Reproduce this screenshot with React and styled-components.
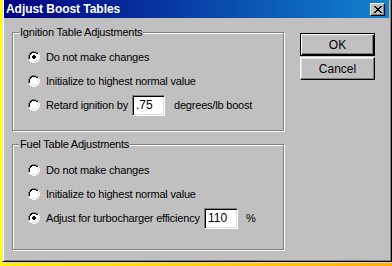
import React from 'react';
import styled, { createGlobalStyle } from 'styled-components';

const GlobalStyle = createGlobalStyle`
  html, body {
    margin: 0;
    padding: 0;
    background: #ffff00;
    overflow: hidden;
  }
  #root {
    width: 392px;
    height: 266px;
  }
`;

const Screen = styled.div`
  width: 392px;
  height: 266px;
  display: flex;
  flex-direction: column;
  padding-left: 2px;
  box-sizing: border-box;
`;

const Window = styled.div`
  width: 390px;
  height: 262px;
  box-sizing: border-box;
  background: #c0c0c0;
  border-left: 1px solid #dfdfdf;
  border-right: 1px solid #000;
  border-bottom: 1px solid #000;
  box-shadow: inset 1px 0 0 #fff, inset -1px -1px 0 #808080;
  padding: 0 2px 2px 1px;
  display: flex;
  flex-direction: column;
  font-family: "Liberation Sans", Arial, sans-serif;
  font-size: 11px;
  letter-spacing: -0.2px;
  color: #000;
`;

const TaskStrip = styled.div`
  flex: 1;
  background: linear-gradient(to right, #ffef00 0%, #ffd000 55%, #ffb000 100%);
  border-top: 1px solid #d8d8d8;
`;

const TitleBar = styled.div`
  height: 18px;
  background: linear-gradient(to right, #000080, #1084d0);
  display: flex;
  align-items: center;
  justify-content: space-between;
  padding: 0 4px 0 2px;
`;

const Title = styled.span`
  color: #fff;
  font-weight: bold;
  font-size: 12px;
  font-family: "Liberation Sans", Arial, sans-serif;
  letter-spacing: -0.05px;
`;

const CloseButton = styled.div`
  width: 15px;
  height: 13px;
  box-sizing: border-box;
  background: #c0c0c0;
  border-top: 1px solid #fff;
  border-left: 1px solid #fff;
  border-right: 1px solid #000;
  border-bottom: 1px solid #000;
  box-shadow: inset -1px -1px 0 #808080;
  display: flex;
  align-items: center;
  justify-content: center;
`;

const Body = styled.div`
  display: flex;
  padding: 14px 0 0 8px;
`;

const Groups = styled.div`
  display: flex;
  flex-direction: column;
  gap: 13px;
`;

const GroupBox = styled.div`
  position: relative;
  width: 272px;
  height: ${(p) => p.$h}px;
  box-sizing: border-box;
  border: 1px solid #808080;
  box-shadow: 1px 1px 0 #fff, inset 1px 1px 0 #fff;
  padding: ${(p) => p.$top}px 0 0 15px;
  display: flex;
  flex-direction: column;
`;

const Legend = styled.span`
  position: absolute;
  top: -8px;
  left: 6px;
  padding: 0 1px;
  background: #c0c0c0;
  line-height: 14px;
`;

const Row = styled.div`
  height: 24px;
  display: flex;
  align-items: center;
  white-space: nowrap;
`;

const Label = styled.span`
  margin-left: 6px;
  ${(p) => (p.$w ? `width: ${p.$w}px; flex-shrink: 0;` : '')}
`;

const TextBox = styled.div`
  width: ${(p) => p.$w}px;
  height: 21px;
  box-sizing: border-box;
  margin-right: ${(p) => p.$after}px;
  background: #fff;
  border-top: 1px solid #808080;
  border-left: 1px solid #808080;
  border-right: 1px solid #fff;
  border-bottom: 1px solid #fff;
  box-shadow: inset 1px 1px 0 #000, inset -1px -1px 0 #dfdfdf;
  padding: 0 0 0 3px;
  display: flex;
  align-items: center;
  font-size: 12px;
  letter-spacing: 0;
`;

const Buttons = styled.div`
  display: flex;
  flex-direction: column;
  gap: 1px;
  margin: 1px 0 0 16px;
`;

const Button = styled.div`
  width: 75px;
  height: 23px;
  box-sizing: border-box;
  background: #c0c0c0;
  border: 1px solid ${(p) => (p.$default ? '#000' : '#fff')};
  border-right-color: #000;
  border-bottom-color: #000;
  box-shadow: ${(p) =>
    p.$default
      ? 'inset 1px 1px 0 #fff, inset -1px -1px 0 #000, inset -2px -2px 0 #808080'
      : 'inset -1px -1px 0 #808080, inset 1px 1px 0 #dfdfdf'};
  display: flex;
  align-items: center;
  justify-content: center;
  font-size: 12px;
  letter-spacing: 0;
`;

function Radio({ checked }) {
  return (
    <svg width="12" height="12" viewBox="0 0 12 12" style={{ flexShrink: 0 }}>
      <path d="M4 0h4v1h2v1h1v2h1v4h-1v2h-1v1h-2v1h-4v-1h-2v-1h-1v-2h-1v-4h1v-2h1v-1h2z" fill="#fff" />
      <path d="M4 0h4v1h2v1h-2v-1h-4v1h-2v2h-1v4h-1v-4h1v-2h1v-1h2z" fill="#808080" />
      <path d="M4 1h4v1h2v1h-2v-1h-4v1h-1v1h-1v4h-1v-4h1v-2h1v-1h1z" fill="#000" />
      <path d="M10 2h1v2h1v4h-1v2h-1v1h-2v1h-4v-1h4v-1h2v-2h1v-4h-1z" fill="#fff" />
      <path d="M10 3h1v5h-1v2h-2v1h-4v-1h4v-1h2z" fill="#dfdfdf" />
      <path d="M4 2h4v1h1v1h1v4h-1v1h-1v1h-4v-1h-1v-1h-1v-4h1v-1h1z" fill="#fff" />
      {checked && <path d="M5 4h2v1h1v2h-1v1h-2v-1h-1v-2h1z" fill="#000" />}
    </svg>
  );
}

function Option({ checked, children }) {
  return (
    <Row>
      <Radio checked={checked} />
      {children}
    </Row>
  );
}

export default function App() {
  return (
    <>
      <GlobalStyle />
      <Screen>
        <Window>
          <TitleBar>
            <Title>Adjust Boost Tables</Title>
            <CloseButton>
              <svg width="8" height="7" viewBox="0 0 8 7">
                <path d="M0 0h2v1h1v1h2v-1h1v-1h2v1h-1v1h-1v1h-1v1h1v1h1v1h1v1h-2v-1h-1v-1h-2v1h-1v1h-2v-1h1v-1h1v-1h1v-1h-1v-1h-1v-1h-1z" fill="#000" />
              </svg>
            </CloseButton>
          </TitleBar>
          <Body>
            <Groups>
              <GroupBox $h={99} $top={12}>
                <Legend>Ignition Table Adjustments</Legend>
                <Option checked>
                  <Label>Do not make changes</Label>
                </Option>
                <Option>
                  <Label>Initialize to highest normal value</Label>
                </Option>
                <Option>
                  <Label $w={86}>Retard ignition by</Label>
                  <TextBox $w={33} $after={9}>.75</TextBox>
                  <span>degrees/lb boost</span>
                </Option>
              </GroupBox>
              <GroupBox $h={106} $top={13}>
                <Legend>Fuel Table Adjustments</Legend>
                <Option>
                  <Label>Do not make changes</Label>
                </Option>
                <Option>
                  <Label>Initialize to highest normal value</Label>
                </Option>
                <Option checked>
                  <Label $w={158}>Adjust for turbocharger efficiency</Label>
                  <TextBox $w={34} $after={8}>110</TextBox>
                  <span>%</span>
                </Option>
              </GroupBox>
            </Groups>
            <Buttons>
              <Button $default>OK</Button>
              <Button>Cancel</Button>
            </Buttons>
          </Body>
        </Window>
        <TaskStrip />
      </Screen>
    </>
  );
}
